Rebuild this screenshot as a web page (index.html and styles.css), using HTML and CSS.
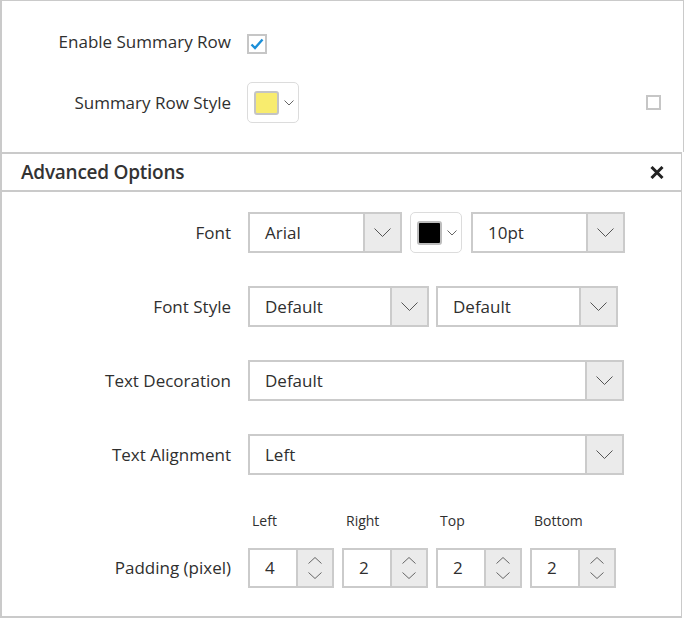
FILE: index.html
```html
<!DOCTYPE html>
<html>
<head>
<meta charset="utf-8">
<link rel="stylesheet" href="styles.css">
</head>
<body>
<div class="frame">
  <section class="top">
    <div class="row r-enable">
      <div class="label">Enable Summary Row</div>
      <div class="controls">
        <span class="checkbox checked">
          <svg width="16" height="16" viewBox="0 0 16 16"><path d="M2.5 8.5 L6 12 L13.5 3.5" fill="none" stroke="#1b8fd8" stroke-width="2.4"/></svg>
        </span>
      </div>
    </div>
    <div class="row r-style">
      <div class="label">Summary Row Style</div>
      <div class="controls">
        <div class="colorpick">
          <span class="swatch yellow"></span>
          <svg class="mini-chev" width="10" height="6" viewBox="0 0 10 6"><path d="M0.5 0.5 L5 5 L9.5 0.5" fill="none" stroke="#666" stroke-width="1"/></svg>
        </div>
        <span class="checkbox small"></span>
      </div>
    </div>
  </section>
  <section class="advanced">
    <div class="adv-head">
      <span class="adv-title">Advanced Options</span>
      <svg class="close" width="14" height="13" viewBox="0 0 14 13"><path d="M1.5 1 L12.5 12 M12.5 1 L1.5 12" stroke="#222" stroke-width="3"/></svg>
    </div>
    <div class="adv-body">
      <div class="row">
        <div class="label">Font</div>
        <div class="controls">
          <div class="select w154"><span class="sel-text">Arial</span><span class="sel-btn"><svg width="17" height="9" viewBox="0 0 17 9"><path d="M0.5 0.5 L8.5 8.5 L16.5 0.5" fill="none" stroke="#555" stroke-width="1"/></svg></span></div>
          <div class="colorpick">
            <span class="swatch black"></span>
            <svg class="mini-chev" width="10" height="6" viewBox="0 0 10 6"><path d="M0.5 0.5 L5 5 L9.5 0.5" fill="none" stroke="#666" stroke-width="1"/></svg>
          </div>
          <div class="select w154 ml1"><span class="sel-text">10pt</span><span class="sel-btn"><svg width="17" height="9" viewBox="0 0 17 9"><path d="M0.5 0.5 L8.5 8.5 L16.5 0.5" fill="none" stroke="#555" stroke-width="1"/></svg></span></div>
        </div>
      </div>
      <div class="row">
        <div class="label">Font Style</div>
        <div class="controls">
          <div class="select w181"><span class="sel-text">Default</span><span class="sel-btn"><svg width="17" height="9" viewBox="0 0 17 9"><path d="M0.5 0.5 L8.5 8.5 L16.5 0.5" fill="none" stroke="#555" stroke-width="1"/></svg></span></div>
          <div class="select w182 mlm1"><span class="sel-text">Default</span><span class="sel-btn"><svg width="17" height="9" viewBox="0 0 17 9"><path d="M0.5 0.5 L8.5 8.5 L16.5 0.5" fill="none" stroke="#555" stroke-width="1"/></svg></span></div>
        </div>
      </div>
      <div class="row">
        <div class="label">Text Decoration</div>
        <div class="controls">
          <div class="select w376"><span class="sel-text">Default</span><span class="sel-btn"><svg width="17" height="9" viewBox="0 0 17 9"><path d="M0.5 0.5 L8.5 8.5 L16.5 0.5" fill="none" stroke="#555" stroke-width="1"/></svg></span></div>
        </div>
      </div>
      <div class="row">
        <div class="label">Text Alignment</div>
        <div class="controls">
          <div class="select w376"><span class="sel-text">Left</span><span class="sel-btn"><svg width="17" height="9" viewBox="0 0 17 9"><path d="M0.5 0.5 L8.5 8.5 L16.5 0.5" fill="none" stroke="#555" stroke-width="1"/></svg></span></div>
        </div>
      </div>
      <div class="row r-pad">
        <div class="label">Padding (pixel)</div>
        <div class="pad-grid">
          <div class="pad-item"><span class="pad-label">Left</span>
            <div class="spin"><span class="spin-val">4</span><span class="spin-btn"><svg width="14" height="22" viewBox="0 0 14 22"><path d="M0.5 6.5 L7 0.5 L13.5 6.5 M0.5 15.5 L7 21.5 L13.5 15.5" fill="none" stroke="#666" stroke-width="1"/></svg></span></div></div>
          <div class="pad-item"><span class="pad-label">Right</span>
            <div class="spin"><span class="spin-val">2</span><span class="spin-btn"><svg width="14" height="22" viewBox="0 0 14 22"><path d="M0.5 6.5 L7 0.5 L13.5 6.5 M0.5 15.5 L7 21.5 L13.5 15.5" fill="none" stroke="#666" stroke-width="1"/></svg></span></div></div>
          <div class="pad-item"><span class="pad-label">Top</span>
            <div class="spin"><span class="spin-val">2</span><span class="spin-btn"><svg width="14" height="22" viewBox="0 0 14 22"><path d="M0.5 6.5 L7 0.5 L13.5 6.5 M0.5 15.5 L7 21.5 L13.5 15.5" fill="none" stroke="#666" stroke-width="1"/></svg></span></div></div>
          <div class="pad-item"><span class="pad-label">Bottom</span>
            <div class="spin"><span class="spin-val">2</span><span class="spin-btn"><svg width="14" height="22" viewBox="0 0 14 22"><path d="M0.5 6.5 L7 0.5 L13.5 6.5 M0.5 15.5 L7 21.5 L13.5 15.5" fill="none" stroke="#666" stroke-width="1"/></svg></span></div></div>
        </div>
      </div>
    </div>
  </section>
</div>
</body>
</html>
```
FILE: styles.css
```css
* { box-sizing: border-box; }
html, body { margin: 0; padding: 0; background: #fff; }
body {
  font-family: "Open Sans", "Noto Sans", sans-serif;
  color: #2f2f2f;
  width: 685px;
  height: 618px;
  overflow: hidden;
}
.frame {
  width: 684px;
  border-top: 1px solid #cacaca;
  border-left: 2px solid #cacaca;
}
.top {
  border-right: 1px solid #cacaca;
  padding: 33px 0 29px 0;
  display: flex;
  flex-direction: column;
  gap: 28px;
}
.row {
  display: grid;
  grid-template-columns: 229px 1fr;
  column-gap: 17px;
  align-items: center;
}
.top .row { column-gap: 16px; }
.label {
  text-align: right;
  font-size: 17px;
  line-height: 20px;
  white-space: nowrap;
}
.r-enable .label { position: relative; top: -2px; }
.controls {
  display: flex;
  align-items: center;
  gap: 8px;
}
.checkbox {
  width: 20px;
  height: 20px;
  border: 2px solid #c6c6c6;
  display: flex;
  align-items: center;
  justify-content: center;
  background: #fff;
}
.checkbox.small {
  width: 15px;
  height: 15px;
  margin-left: auto;
  margin-right: 22px;
}
.colorpick {
  width: 52px;
  height: 41px;
  border: 1.5px solid #dcdcdc;
  border-radius: 5px;
  display: flex;
  align-items: center;
  padding-left: 6px;
  gap: 5px;
  background: #fff;
}
.swatch {
  width: 25px;
  height: 24px;
  border: 2px solid #c4c4c4;
  border-radius: 3px;
}
.swatch.yellow { background: #f8ec6e; }
.swatch.black { background: #000; border-color: #bdbdbd; }
.mini-chev { display: block; }
.advanced {
  border-top: 2px solid #cacaca;
  border-right: 1px solid #cacaca;
  border-bottom: 2px solid #cacaca;
  width: 680px;
}
.adv-head {
  height: 38px;
  border-bottom: 2px solid #cacaca;
  display: flex;
  align-items: center;
  justify-content: space-between;
  padding: 0 17px 0 19px;
}
.adv-title {
  font-size: 19px;
  font-weight: 600;
  color: #333;
  letter-spacing: -0.25px;
}
.close { display: block; }
.adv-body {
  padding: 20px 0 28px 0;
  display: flex;
  flex-direction: column;
  gap: 33px;
}
.select {
  height: 41px;
  border: 2px solid #cbcbcb;
  display: flex;
  background: #fff;
}
.w154 { width: 154px; }
.w181 { width: 181px; }
.w182 { width: 182px; }
.w376 { width: 376px; }
.ml1 { margin-left: 1px; }
.mlm1 { margin-left: -1px; }
.sel-text {
  flex: 1;
  font-size: 17px;
  line-height: 38px;
  padding-left: 15px;
  border-radius: 3px 0 0 3px;
}
.sel-btn {
  width: 37px;
  background: #ebebeb;
  border-left: 2px solid #cbcbcb;
  display: flex;
  align-items: center;
  justify-content: center;
}
.sel-btn svg { display: block; }
.r-pad { align-items: end; margin-top: 3px; }
.r-pad .label { line-height: 40px; }
.pad-grid {
  display: flex;
  gap: 8px;
}
.pad-item {
  display: flex;
  flex-direction: column;
  gap: 17px;
}
.pad-label {
  font-size: 14px;
  line-height: 20px;
  padding-left: 4px;
}
.spin {
  width: 86px;
  height: 40px;
  border: 2px solid #cbcbcb;
  display: flex;
  background: #fff;
}
.spin-val {
  flex: 1;
  font-size: 17px;
  line-height: 36px;
  padding-left: 15px;
}
.spin-btn {
  width: 36px;
  background: #ebebeb;
  border-left: 2px solid #cbcbcb;
  display: flex;
  align-items: center;
  justify-content: center;
}
.spin-btn svg { display: block; }
```
